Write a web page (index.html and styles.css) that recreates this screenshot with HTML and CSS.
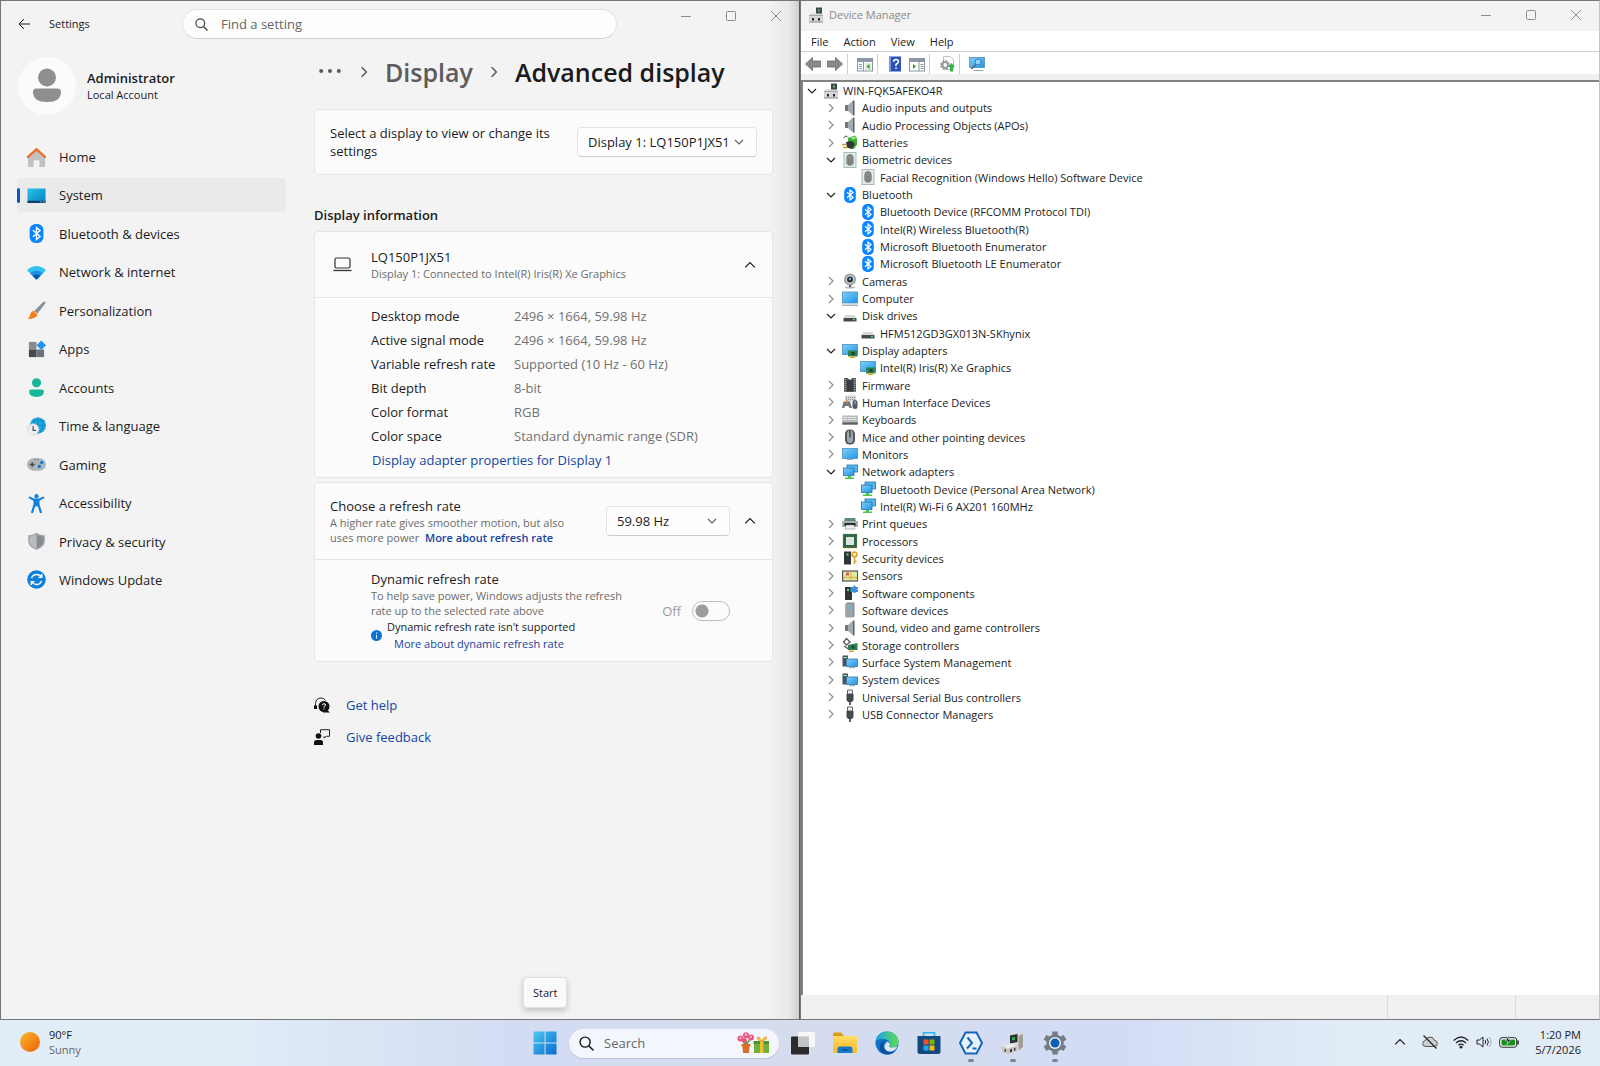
FILE: index.html
```html
<!doctype html>
<html lang="en">
  <head>
    <title>Desktop</title>
    <meta charset="UTF-8" />
    <meta name="viewport" content="width=device-width, initial-scale=1.0" />
    <link rel="stylesheet" href="styles.css">
  </head>

  <body>
    <!-- Shared icons -->
    <svg class="sprite" aria-hidden="true">
      <defs>
        <linearGradient id="g-screen" x1="0" y1="0" x2="1" y2="1">
          <stop offset="0" stop-color="#27c5e8" />
          <stop offset="1" stop-color="#0a7fc4" />
        </linearGradient>
        <linearGradient id="g-mon" x1="0" y1="0" x2="1" y2="1">
          <stop offset="0" stop-color="#7fd0fb" />
          <stop offset="1" stop-color="#1f94e6" />
        </linearGradient>
        <linearGradient id="g-sun" x1="0" y1="0" x2="1" y2="1">
          <stop offset="0" stop-color="#f7b928" />
          <stop offset="1" stop-color="#f2600c" />
        </linearGradient>
        <linearGradient id="g-win" x1="0" y1="0" x2="1" y2="1">
          <stop offset="0" stop-color="#4ccbf5" />
          <stop offset="1" stop-color="#0869cb" />
        </linearGradient>
        <linearGradient id="g-edge" x1="0" y1="0" x2="1" y2="0">
          <stop offset="0" stop-color="#1c9de8" />
          <stop offset="1" stop-color="#5fe04f" />
        </linearGradient>
        <linearGradient id="g-folder" x1="0" y1="0" x2="0" y2="1">
          <stop offset="0" stop-color="#ffdb66" />
          <stop offset="1" stop-color="#f8b91e" />
        </linearGradient>
      </defs>

      <symbol id="down" viewBox="0 0 10 10"><path d="M1 3l4 4 4-4" fill="none" stroke="currentColor" stroke-width="1.2" /></symbol>
      <symbol id="up" viewBox="0 0 10 10"><path d="M1 7l4-4 4 4" fill="none" stroke="currentColor" stroke-width="1" /></symbol>
      <symbol id="right" viewBox="0 0 10 10"><path d="M3 1l4 4-4 4" fill="none" stroke="currentColor" stroke-width="1.2" /></symbol>
      <symbol id="win-min" viewBox="0 0 10 10"><path d="M0 5.5h10" stroke="currentColor" /></symbol>
      <symbol id="win-max" viewBox="0 0 10 10"><rect x=".5" y=".5" width="9" height="9" rx="1" fill="none" stroke="currentColor" /></symbol>
      <symbol id="win-close" viewBox="0 0 10 10"><path d="M0 0l10 10M10 0L0 10" stroke="currentColor" /></symbol>
      <symbol id="search" viewBox="0 0 14 14"><circle cx="5.7" cy="5.7" r="4.7" fill="none" stroke="currentColor" stroke-width="1.3" /><path d="M9.2 9.2l4.3 4.3" stroke="currentColor" stroke-width="1.4" /></symbol>

      <!-- Settings navigation -->
      <symbol id="nav-home" viewBox="0 0 20 20">
        <path d="M1 9l9-7 9 7v11h-6v-7H7v7H1z" fill="#c2c2c2" />
        <path d="M1 9.500l9-8.200 9 8.200" fill="none" stroke="#ee6a1c" stroke-width="2.400" stroke-linecap="round" />
      </symbol>
      <symbol id="nav-system" viewBox="0 0 20 20">
        <rect x=".5" y="2.500" width="19" height="15" rx="1" fill="url(#g-screen)" />
        <path d="M.5 15.500h19v1.500q0 1-1 1h-17q-1 0-1-1z" fill="#0b3d6b" />
        <path d="M14 16.700h1.500M17 16.700h1.500" stroke="#9fd8ff" />
      </symbol>
      <symbol id="bt" viewBox="0 0 16 16">
        <rect x="2.200" y="0" width="11.600" height="16" rx="5" fill="#0a84ff" />
        <path d="M5 5.300l6 5.200L8 13V3l3 2.500L5 10.700" fill="none" stroke="#fff" stroke-width="1.200" />
      </symbol>
      <symbol id="nav-wifi" viewBox="0 0 20 20">
        <path d="M0 7.500Q10-1 20 7.500L10 17.500z" fill="#35c2f1" />
        <path d="M3.200 10.700q6.800-5.400 13.600 0L10 17.500z" fill="#1a8fe3" />
        <path d="M6 13.500q4-3 8 0l-4 4z" fill="#0c54a5" />
      </symbol>
      <symbol id="nav-brush" viewBox="0 0 20 20">
        <path d="M18.500.5q1.500.5.700 2.200L11 13.200 7.500 10.500 16.700 1.200z" fill="#8a9096" />
        <path d="M7.500 10.300l3.500 3q-.2 5.700-10.500 5.700 2.500-1.500 2.800-4.700 1-4 4.200-4z" fill="#f3801f" />
        <path d="M7.500 10.300l3.500 3-.7 1.200-4-3.500z" fill="#f9b54a" />
      </symbol>
      <symbol id="nav-apps" viewBox="0 0 20 20">
        <rect x="2" y="2" width="8" height="8" fill="#868c92" />
        <rect x="2" y="10" width="8" height="8" fill="#44494f" />
        <rect x="10" y="10" width="8" height="8" fill="#6c737a" />
        <path d="M15 .5l5 5-5 5-5-5z" fill="#2393ee" />
      </symbol>
      <symbol id="nav-user" viewBox="0 0 20 20">
        <circle cx="10" cy="5" r="4.800" fill="#18b79c" />
        <path d="M2.200 14q0-2 2-2h11.600q2 0 2 2 0 6-7.800 6t-7.800-6z" fill="#18b79c" />
      </symbol>
      <symbol id="nav-time" viewBox="0 0 20 20">
        <circle cx="11.500" cy="9" r="8.500" fill="#1ea7dc" />
        <path d="M11.500.5v17M5 4h14M5 9h15M8 2q-3 7 2 14M15 2q4 7-1 14" fill="none" stroke="#0f84c4" stroke-width=".8" />
        <circle cx="6.500" cy="13" r="6" fill="#eceff1" stroke="#c4c9cd" stroke-width=".6" />
        <path d="M6.500 9.500V14H9.500" fill="none" stroke="#4c5359" stroke-width="1.300" />
      </symbol>
      <symbol id="nav-game" viewBox="0 0 20 20">
        <rect x="0" y="3.500" width="20" height="13" rx="6.500" fill="#aeb5bb" />
        <path d="M3 10h5M5.500 7.500v5" stroke="#3f464d" stroke-width="1.400" />
        <circle cx="15.500" cy="8" r="1.700" fill="#1473cf" />
        <circle cx="13" cy="12" r="1.700" fill="#1473cf" />
        <path d="M8 4.500h1.500M10.500 4.500H12" stroke="#59616a" />
      </symbol>
      <symbol id="nav-access" viewBox="0 0 20 20">
        <circle cx="10" cy="2.300" r="2.200" fill="#1182dc" />
        <path d="M3 3.800l4 2.200h6l4-2.200M8 6v5l-2.500 8M12 6v5l2.500 8" fill="none" stroke="#1182dc" stroke-width="2.300" stroke-linecap="round" />
        <path d="M7.500 5.500h5V13h-5z" fill="#1182dc" />
      </symbol>
      <symbol id="nav-shield" viewBox="0 0 20 20">
        <path d="M10 .8q3.500 2.700 8.800 2.700v6q0 6-8.800 9.500Q1.200 15.500 1.200 9.500v-6Q6.500 3.500 10 .8z" fill="#a0a5aa" />
        <path d="M10 2.500q3.500 2.200 7.300 2.500v4.500q0 4.700-7.300 8z" fill="#858b91" />
        <path d="M10 2.500Q6.500 4.700 2.700 5v4.500q0 4.700 7.300 8z" fill="#b9bdc1" />
      </symbol>
      <symbol id="nav-update" viewBox="0 0 20 20">
        <circle cx="10" cy="10" r="9.800" fill="#0e7fda" />
        <path d="M4.700 8.500q1.600-3.700 5.500-3.700 3.300 0 5 2.700M15.300 11.500q-1.600 3.700-5.500 3.700-3.300 0-5-2.700M15.500 4.200v3.600H12M4.500 15.800v-3.600H8" fill="none" stroke="#fff" stroke-width="1.500" />
      </symbol>

      <!-- Device tree -->
      <symbol id="dm" viewBox="0 0 16 16">
        <path d="M8 .5h6V9H8z" fill="#44484b" />
        <path d="M10 2.500h2v2h-2z" fill="#45c25c" />
        <path d="M1 8l2-1.500h11L15 8v7H1z" fill="#d5d7d9" />
        <path d="M1 8.500h14" stroke="#a5a9ac" />
        <path d="M4 11h2v2.500H4zM10 11h2v2.500h-2z" fill="#26292c" />
        <path d="M1 15h14" stroke="#83888c" />
      </symbol>
      <symbol id="speaker" viewBox="0 0 16 16">
        <path d="M3 5h3v6H3z" fill="#70767b" />
        <path d="M6 5l5-4.500v15L6 11z" fill="#a4abb1" />
        <path d="M11 .5h1.500v15H11z" fill="#5b6166" />
      </symbol>
      <symbol id="battery" viewBox="0 0 16 16">
        <path d="M6 3l7-2.500 2 3v6l-3 4.500-6-1z" fill="#3cae35" />
        <path d="M9 2.500l4-1 1 2-4 1z" fill="#a8e59b" />
        <path d="M4 7l6-1 3 3-3 5-5-1.500z" fill="#333" />
        <path d="M0 9.500h4M1 12.500h4" stroke="#c99b1e" stroke-width="1.300" />
        <path d="M1.500 3Q4-.500 6 2.500" fill="none" stroke="#444" />
      </symbol>
      <symbol id="finger" viewBox="0 0 16 16">
        <rect x="2" y=".5" width="12" height="15" fill="#e4ecea" stroke="#a8bbb5" />
        <path d="M4.500 6q0-4 3.500-4t3.500 4v4q0 4-3.500 4t-3.500-4z" fill="#9fa4a6" />
        <path d="M5 12V6q0-3 3-3t3 3v6M6.700 13V6.500q0-1.700 1.300-1.700t1.300 1.700V13M8 7v6" fill="none" stroke="#5f6466" stroke-width=".8" />
      </symbol>
      <symbol id="camera" viewBox="0 0 16 16">
        <ellipse cx="8" cy="14.500" rx="5" ry="1" fill="#b2b4b6" />
        <path d="M7 11h2v3H7z" fill="#505356" />
        <circle cx="8" cy="6.500" r="6" fill="#9b9fa2" />
        <circle cx="8" cy="6.500" r="4.200" fill="#d2d6d8" />
        <circle cx="8" cy="6.500" r="3" fill="#2b2e31" />
        <circle cx="8" cy="6" r="1.200" fill="#77a6cf" />
      </symbol>
      <symbol id="computer" viewBox="0 0 16 16">
        <rect x=".5" y="1" width="15" height="11" fill="url(#g-mon)" stroke="#4c91bd" stroke-width=".8" />
        <path d="M0 14.200h16" stroke="#8fa3b1" stroke-width="1.200" />
      </symbol>
      <symbol id="disk" viewBox="0 0 16 16">
        <path d="M3.500 7h9l2 3h-13z" fill="#d7d9da" />
        <path d="M1.500 10h13v3.500h-13z" fill="#45494c" />
        <path d="M11 11.500h2" stroke="#4fe05a" stroke-width="1.400" />
      </symbol>
      <symbol id="gpu" viewBox="0 0 16 16">
        <rect x=".5" y="1.500" width="15" height="10" fill="url(#g-mon)" stroke="#4c91bd" stroke-width=".8" />
        <path d="M6 7.500h9.500v6H6z" fill="#2d8057" />
        <path d="M8 13.500h5V15H8z" fill="#e9a81c" />
        <circle cx="11" cy="10.500" r="1.800" fill="#16492f" />
      </symbol>
      <symbol id="firmware" viewBox="0 0 16 16">
        <path d="M2 1h4l1 1.500h2L10 1h4v14H2z" fill="#55595c" />
        <path d="M5 3h6v11H5z" fill="#3a3d40" />
        <path d="M3.200 2v13M12.800 2v13" stroke="#c2c5c7" stroke-dasharray="1 1" />
      </symbol>
      <symbol id="hid" viewBox="0 0 16 16">
        <path d="M3 1.500h11v6H3z" fill="#d4d7d9" />
        <path d="M4 3.500h9M4 5.500h9" stroke="#8e9396" stroke-dasharray="1 1" />
        <path d="M0 14l1.500-6.500H8l2 6.500H7.500L6.500 12h-3L2 14z" fill="#707a82" />
        <circle cx="5" cy="7.500" r="1.300" fill="#e08a35" />
        <rect x="10.500" y="6" width="5" height="9" rx="2.500" fill="#565c62" />
        <path d="M13 7v3" stroke="#9ec4e4" />
      </symbol>
      <symbol id="keyboard" viewBox="0 0 16 16">
        <rect x=".3" y="3.500" width="15.500" height="9" fill="#b4b9bd" />
        <path d="M1.500 5.500h13M1.500 7.500h13" stroke="#f5f6f7" stroke-dasharray="1.500 .7" />
        <path d="M.3 11.500h15.500" stroke="#596067" stroke-width="2.200" />
      </symbol>
      <symbol id="mouse" viewBox="0 0 16 16">
        <rect x="3" y=".5" width="10" height="15" rx="4.500" fill="#50565c" />
        <rect x="5" y="1.500" width="6" height="12.500" rx="3" fill="#9da6ae" />
        <path d="M8 1.500v7" stroke="#363b40" stroke-width="1.300" />
      </symbol>
      <symbol id="monitor" viewBox="0 0 16 16">
        <rect x=".5" y="2.500" width="15" height="10" fill="url(#g-mon)" stroke="#4c91bd" stroke-width=".8" />
        <path d="M5 13.500h6" stroke="#8fa3b1" />
      </symbol>
      <symbol id="network" viewBox="0 0 16 16">
        <rect x="5" y="1" width="10.500" height="7" fill="#59b7f0" stroke="#2473a8" stroke-width=".8" />
        <rect x="1.500" y="4" width="10.500" height="7.500" fill="url(#g-mon)" stroke="#2473a8" stroke-width=".8" />
        <path d="M6 12h3v1.500h3V15H3v-1.500h3z" fill="#4ec44b" />
      </symbol>
      <symbol id="printer" viewBox="0 0 16 16">
        <path d="M3 2h10l1 3H2z" fill="#5b8a86" />
        <path d="M0 5h16v6H0z" fill="#a9afb4" />
        <path d="M2.500 7h11v3h-11z" fill="#24282b" />
        <path d="M4 9h8l1 4H3z" fill="#eef0f1" stroke="#777" stroke-width=".5" />
      </symbol>
      <symbol id="cpu" viewBox="0 0 16 16">
        <rect x="1" y="1" width="14" height="14" fill="#2c6848" stroke="#b98d3a" stroke-width=".7" stroke-dasharray="1 1" />
        <rect x="4" y="4" width="8" height="8" fill="#dfe3e1" />
      </symbol>
      <symbol id="security" viewBox="0 0 16 16">
        <path d="M2 1.500h7v13H2z" fill="#323537" />
        <path d="M4.500 3.500h2v2h-2z" fill="#5be060" />
        <circle cx="12.500" cy="4.500" r="2.300" fill="none" stroke="#e0a02c" stroke-width="1.800" />
        <path d="M12.500 7v7M12.500 11.500h2" stroke="#e0a02c" stroke-width="1.600" />
      </symbol>
      <symbol id="sensor" viewBox="0 0 16 16">
        <rect x=".6" y="3" width="15" height="10" fill="#dcebb0" stroke="#4d5052" stroke-width="1.200" />
        <path d="M1 9.500h14M9 3.500v9" stroke="#e5b93e" stroke-width="1.300" />
        <path d="M4 4.500h3v3H4z" fill="#db5a48" />
      </symbol>
      <symbol id="component" viewBox="0 0 16 16">
        <path d="M3 2h7v13H3z" fill="#323537" />
        <path d="M5 4h2v2H5z" fill="#5be060" />
        <path d="M8.500 2h3V.5h2V2H16v2h-1v1h1v2h-2.500v1h-2V7h-3z" fill="#3a8fdc" />
      </symbol>
      <symbol id="software" viewBox="0 0 16 16">
        <path d="M3.500 2l1.500-1.500h7.500V15h-9z" fill="#868d96" />
        <path d="M3.500 2h7.500v13.500H3.500z" fill="#9ca3ab" />
        <path d="M6.500 4.500h2.300v2.300H6.500z" fill="#45c2e8" />
      </symbol>
      <symbol id="storage" viewBox="0 0 16 16">
        <path d="M4.500 1.500L8 5 4.500 8 1.500 5z" fill="none" stroke="#555a5e" stroke-width="1.300" />
        <path d="M2 9l6 4" stroke="#555a5e" stroke-width="1.500" />
        <path d="M6 8l9.500-2v7H6z" fill="#2d8057" />
        <circle cx="11" cy="10" r="1.700" fill="#16492f" />
        <path d="M7 13.500h5V15H7z" fill="#e9a81c" />
      </symbol>
      <symbol id="sysdev" viewBox="0 0 16 16">
        <path d="M.5 1.500H6v11H.5z" fill="#4c5358" />
        <path d="M1.500 3.500H5" stroke="#8ff0d8" />
        <rect x="4.500" y="5" width="11" height="7.500" fill="url(#g-mon)" stroke="#3a7ba8" stroke-width=".8" />
        <path d="M7 13.700h6" stroke="#8fa3b1" />
      </symbol>
      <symbol id="usb" viewBox="0 0 16 16">
        <path d="M5.500 1h5v4h-5z" fill="#f0f0f0" stroke="#606468" />
        <path d="M4.500 5h7v6L10 13H6l-1.500-2z" fill="#45494c" />
        <path d="M8 13v3" stroke="#45494c" stroke-width="1.700" />
      </symbol>
    </svg>

    <main class="desktop">
      <section class="window settings" aria-label="Settings">
        <header class="settings-bar">
          <button class="icon-btn" aria-label="Back">
            <svg width="12" height="12" viewBox="0 0 12 12"><path d="M6 1L1 6l5 5M1 6h11" fill="none" stroke="currentColor" /></svg>
          </button>
          <span class="app-name">Settings</span>
          <label class="find">
            <svg width="13" height="13"><use href="#search" /></svg>
            <input type="text" placeholder="Find a setting" aria-label="Find a setting" />
          </label>
          <div class="controls">
            <button class="icon-btn" aria-label="Minimize"><svg width="10" height="10"><use href="#win-min" /></svg></button>
            <button class="icon-btn" aria-label="Maximize"><svg width="10" height="10"><use href="#win-max" /></svg></button>
            <button class="icon-btn" aria-label="Close"><svg width="10" height="10"><use href="#win-close" /></svg></button>
          </div>
        </header>

        <div class="settings-body">
          <aside class="sidebar">
            <div class="account">
              <svg class="avatar" viewBox="0 0 58 58">
                <circle cx="29" cy="29" r="29" fill="#fbfbfb" />
                <circle cx="29" cy="20.500" r="9" fill="#8f8f8f" />
                <path d="M15 35q0-3.500 3.500-3.500h21q3.500 0 3.500 3.500 0 10-14 10T15 35z" fill="#8f8f8f" />
              </svg>
              <div>
                <div class="account-name">Administrator</div>
                <div class="account-type">Local Account</div>
              </div>
            </div>
            <nav class="nav">
              <a href="#"><svg><use href="#nav-home" /></svg>Home</a>
              <a href="#" class="active" aria-current="page"><svg><use href="#nav-system" /></svg>System</a>
              <a href="#"><svg><use href="#bt" /></svg>Bluetooth &amp; devices</a>
              <a href="#"><svg><use href="#nav-wifi" /></svg>Network &amp; internet</a>
              <a href="#"><svg><use href="#nav-brush" /></svg>Personalization</a>
              <a href="#"><svg><use href="#nav-apps" /></svg>Apps</a>
              <a href="#"><svg><use href="#nav-user" /></svg>Accounts</a>
              <a href="#"><svg><use href="#nav-time" /></svg>Time &amp; language</a>
              <a href="#"><svg><use href="#nav-game" /></svg>Gaming</a>
              <a href="#"><svg><use href="#nav-access" /></svg>Accessibility</a>
              <a href="#"><svg><use href="#nav-shield" /></svg>Privacy &amp; security</a>
              <a href="#"><svg><use href="#nav-update" /></svg>Windows Update</a>
            </nav>
          </aside>

          <div class="page">
            <div class="breadcrumb">
              <button class="icon-btn" aria-label="More">
                <svg width="22" height="6" viewBox="0 0 22 6"><g fill="#5a5a5a"><circle cx="2.200" cy="2" r="2" /><circle cx="11" cy="2" r="2" /><circle cx="19.800" cy="2" r="2" /></g></svg>
              </button>
              <svg class="crumb-sep" width="12" height="12"><use href="#right" /></svg>
              <a href="#">Display</a>
              <svg class="crumb-sep" width="12" height="12"><use href="#right" /></svg>
              <h1>Advanced display</h1>
            </div>

            <div class="card select-card">
              <label for="display-select">Select a display to view or change its settings</label>
              <span class="select">
                <select id="display-select">
                  <option>Display 1: LQ150P1JX51</option>
                </select>
                <svg width="10" height="10"><use href="#down" /></svg>
              </span>
            </div>

            <h2>Display information</h2>
            <div class="card">
              <div class="card-head">
                <svg class="laptop" width="19" height="15" viewBox="0 0 19 15"><rect x="2" y="1" width="15" height="10" rx="1.500" fill="none" stroke="#333" stroke-width="1.200" /><path d="M.5 13.500h18" stroke="#333" stroke-width="1.300" /></svg>
                <div class="grow">
                  <div class="title">LQ150P1JX51</div>
                  <div class="note">Display 1: Connected to Intel(R) Iris(R) Xe Graphics</div>
                </div>
                <button class="icon-btn" aria-label="Collapse"><svg width="12" height="12"><use href="#up" /></svg></button>
              </div>
              <div class="card-body info">
                <dl>
                  <dt>Desktop mode</dt><dd>2496 × 1664, 59.98 Hz</dd>
                  <dt>Active signal mode</dt><dd>2496 × 1664, 59.98 Hz</dd>
                  <dt>Variable refresh rate</dt><dd>Supported (10 Hz - 60 Hz)</dd>
                  <dt>Bit depth</dt><dd>8-bit</dd>
                  <dt>Color format</dt><dd>RGB</dd>
                  <dt>Color space</dt><dd>Standard dynamic range (SDR)</dd>
                </dl>
                <a class="adapter" href="#">Display adapter properties for Display 1</a>
              </div>
            </div>

            <div class="card">
              <div class="card-head rate">
                <div class="grow">
                  <label class="title" for="rate-select">Choose a refresh rate</label>
                  <div class="note">A higher rate gives smoother motion, but also uses more power <a class="strong" href="#">More about refresh rate</a></div>
                </div>
                <span class="select">
                  <select id="rate-select">
                    <option>59.98 Hz</option>
                  </select>
                  <svg width="10" height="10"><use href="#down" /></svg>
                </span>
                <button class="icon-btn" aria-label="Collapse"><svg width="12" height="12"><use href="#up" /></svg></button>
              </div>
              <div class="card-body dynamic">
                <div class="grow">
                  <div class="title">Dynamic refresh rate</div>
                  <div class="note">To help save power, Windows adjusts the refresh rate up to the selected rate above</div>
                  <div class="hint">
                    <svg width="11" height="11" viewBox="0 0 11 11"><circle cx="5.500" cy="5.500" r="5.500" fill="#0a74d4" /><path d="M5.500 2.500v1.300M5.500 5v3.500" stroke="#fff" /></svg>
                    <div>
                      <div>Dynamic refresh rate isn't supported</div>
                      <a href="#">More about dynamic refresh rate</a>
                    </div>
                  </div>
                </div>
                <label class="off">Off <input type="checkbox" class="toggle" disabled /></label>
              </div>
            </div>

            <div class="links">
              <a href="#">
                <svg viewBox="0 0 16 16"><path d="M1.500 11V6.500Q2 1 7 1q3.200 0 4.500 2.500" fill="none" stroke="#222" /><path d="M0 8.500h3V12H0z" fill="#111" /><circle cx="10" cy="9.500" r="5.500" fill="#111" /><path d="M11 11l5 4.500H9z" fill="#111" /><path d="M8.500 8.200q0-1.500 1.500-1.500t1.500 1.300q0 .8-1.500 1.700v.8M10 11.500v1" fill="none" stroke="#fff" /></svg>
                Get help
              </a>
              <a href="#">
                <svg viewBox="0 0 16 16"><circle cx="4.500" cy="7" r="2.800" fill="#111" /><path d="M0 16v-2.500q0-2.500 2.500-2.500h4Q9 11 9 13.500V16z" fill="#111" /><path d="M6.500 4V.7h9v6.600h-3L10 9V7.300" fill="none" stroke="#222" /></svg>
                Give feedback
              </a>
            </div>
          </div>
        </div>
      </section>

      <section class="window devices" aria-label="Device Manager">
        <header class="devices-bar">
          <svg width="16" height="16"><use href="#dm" /></svg>
          <span class="grow">Device Manager</span>
          <div class="controls">
            <button class="icon-btn" aria-label="Minimize"><svg width="10" height="10"><use href="#win-min" /></svg></button>
            <button class="icon-btn" aria-label="Maximize"><svg width="10" height="10"><use href="#win-max" /></svg></button>
            <button class="icon-btn" aria-label="Close"><svg width="10" height="10"><use href="#win-close" /></svg></button>
          </div>
        </header>
        <div class="menu">
          <button>File</button>
          <button>Action</button>
          <button>View</button>
          <button>Help</button>
        </div>
        <div class="toolbar">
          <button class="icon-btn" aria-label="Back"><svg viewBox="0 0 16 16"><path d="M.5 8l7-6.500V5h8v6h-8v3.500z" fill="#8a8a8a" stroke="#666" stroke-width=".8" /></svg></button>
          <button class="icon-btn" aria-label="Forward"><svg viewBox="0 0 16 16"><path d="M15.500 8l-7-6.500V5h-8v6h8v3.500z" fill="#8a8a8a" stroke="#666" stroke-width=".8" /></svg></button>
          <i></i>
          <button class="icon-btn" aria-label="Console tree"><svg viewBox="0 0 16 16"><rect x=".5" y="2.500" width="15" height="12.500" fill="#fff" stroke="#8a939b" /><path d="M1 3h14v3H1z" fill="#8c98a3" /><path d="M2 8.500h3M2 10.500h3M2 12.500h3" stroke="#6aa0d8" /><path d="M6.500 6v9" stroke="#8a939b" /><path d="M8 7h6.500v7H8z" fill="#dfe9dc" /><path d="M12.500 8v5L9.500 10.500z" fill="#2f9c2f" /></svg></button>
          <i></i>
          <button class="icon-btn" aria-label="Help"><svg viewBox="0 0 16 16"><rect x="2" y=".5" width="12" height="15" fill="#2c51b8" /><path d="M2 .5h2v15H2z" fill="#7d97dd" /><path d="M6.500 5.800q0-2.300 2.500-2.300t2.500 2.100Q11.500 7 9 8.500V10M9 11.500v1.500" fill="none" stroke="#fff" stroke-width="1.500" /></svg></button>
          <button class="icon-btn" aria-label="Action pane"><svg viewBox="0 0 16 16"><rect x=".5" y="2.500" width="15" height="12.500" fill="#fff" stroke="#8a939b" /><path d="M1 3h14v3H1z" fill="#8c98a3" /><path d="M11.500 8.500h3M11.500 10.500h3M11.500 12.500h3" stroke="#8a939b" /><path d="M10 6v9" stroke="#8a939b" /><path d="M4 8v5l3-2.500z" fill="#2f9c2f" /></svg></button>
          <i></i>
          <button class="icon-btn" aria-label="Scan for hardware changes"><svg viewBox="0 0 16 16"><path d="M4.500.5h7l3 3v10h-10z" fill="#fbfbfb" stroke="#c2c2c2" /><circle cx="6" cy="9" r="3.600" fill="none" stroke="#8f9498" stroke-width="2.500" stroke-dasharray="2 .8" /><circle cx="6" cy="9" r="2.700" fill="none" stroke="#8f9498" stroke-width="1.200" /><path d="M12.500 7l3.500 4h-2v4.500h-3V11H9z" fill="#34b34a" /></svg></button>
          <i></i>
          <button class="icon-btn" aria-label="Remote computer"><svg viewBox="0 0 16 16"><rect x=".5" y="1.500" width="15" height="10" fill="url(#g-mon)" stroke="#4c91bd" stroke-width=".8" /><circle cx="9" cy="6" r="3" fill="#8fd2f8" stroke="#4a7ea3" /><path d="M7 8.200L2.500 13" stroke="#5c6a75" stroke-width="1.600" /><path d="M5 14.500h9" stroke="#8fa3b1" /></svg></button>
        </div>

        <ul class="tree">
          <li class="root open"><svg class="arrow"><use href="#down" /></svg><svg><use href="#dm" /></svg>WIN-FQK5AFEKO4R</li>
          <li><svg class="arrow"><use href="#right" /></svg><svg><use href="#speaker" /></svg>Audio inputs and outputs</li>
          <li><svg class="arrow"><use href="#right" /></svg><svg><use href="#speaker" /></svg>Audio Processing Objects (APOs)</li>
          <li><svg class="arrow"><use href="#right" /></svg><svg><use href="#battery" /></svg>Batteries</li>
          <li class="open"><svg class="arrow"><use href="#down" /></svg><svg><use href="#finger" /></svg>Biometric devices</li>
          <li class="leaf"><svg><use href="#finger" /></svg>Facial Recognition (Windows Hello) Software Device</li>
          <li class="open"><svg class="arrow"><use href="#down" /></svg><svg><use href="#bt" /></svg>Bluetooth</li>
          <li class="leaf"><svg><use href="#bt" /></svg>Bluetooth Device (RFCOMM Protocol TDI)</li>
          <li class="leaf"><svg><use href="#bt" /></svg>Intel(R) Wireless Bluetooth(R)</li>
          <li class="leaf"><svg><use href="#bt" /></svg>Microsoft Bluetooth Enumerator</li>
          <li class="leaf"><svg><use href="#bt" /></svg>Microsoft Bluetooth LE Enumerator</li>
          <li><svg class="arrow"><use href="#right" /></svg><svg><use href="#camera" /></svg>Cameras</li>
          <li><svg class="arrow"><use href="#right" /></svg><svg><use href="#computer" /></svg>Computer</li>
          <li class="open"><svg class="arrow"><use href="#down" /></svg><svg><use href="#disk" /></svg>Disk drives</li>
          <li class="leaf"><svg><use href="#disk" /></svg>HFM512GD3GX013N-SKhynix</li>
          <li class="open"><svg class="arrow"><use href="#down" /></svg><svg><use href="#gpu" /></svg>Display adapters</li>
          <li class="leaf"><svg><use href="#gpu" /></svg>Intel(R) Iris(R) Xe Graphics</li>
          <li><svg class="arrow"><use href="#right" /></svg><svg><use href="#firmware" /></svg>Firmware</li>
          <li><svg class="arrow"><use href="#right" /></svg><svg><use href="#hid" /></svg>Human Interface Devices</li>
          <li><svg class="arrow"><use href="#right" /></svg><svg><use href="#keyboard" /></svg>Keyboards</li>
          <li><svg class="arrow"><use href="#right" /></svg><svg><use href="#mouse" /></svg>Mice and other pointing devices</li>
          <li><svg class="arrow"><use href="#right" /></svg><svg><use href="#monitor" /></svg>Monitors</li>
          <li class="open"><svg class="arrow"><use href="#down" /></svg><svg><use href="#network" /></svg>Network adapters</li>
          <li class="leaf"><svg><use href="#network" /></svg>Bluetooth Device (Personal Area Network)</li>
          <li class="leaf"><svg><use href="#network" /></svg>Intel(R) Wi-Fi 6 AX201 160MHz</li>
          <li><svg class="arrow"><use href="#right" /></svg><svg><use href="#printer" /></svg>Print queues</li>
          <li><svg class="arrow"><use href="#right" /></svg><svg><use href="#cpu" /></svg>Processors</li>
          <li><svg class="arrow"><use href="#right" /></svg><svg><use href="#security" /></svg>Security devices</li>
          <li><svg class="arrow"><use href="#right" /></svg><svg><use href="#sensor" /></svg>Sensors</li>
          <li><svg class="arrow"><use href="#right" /></svg><svg><use href="#component" /></svg>Software components</li>
          <li><svg class="arrow"><use href="#right" /></svg><svg><use href="#software" /></svg>Software devices</li>
          <li><svg class="arrow"><use href="#right" /></svg><svg><use href="#speaker" /></svg>Sound, video and game controllers</li>
          <li><svg class="arrow"><use href="#right" /></svg><svg><use href="#storage" /></svg>Storage controllers</li>
          <li><svg class="arrow"><use href="#right" /></svg><svg><use href="#sysdev" /></svg>Surface System Management</li>
          <li><svg class="arrow"><use href="#right" /></svg><svg><use href="#sysdev" /></svg>System devices</li>
          <li><svg class="arrow"><use href="#right" /></svg><svg><use href="#usb" /></svg>Universal Serial Bus controllers</li>
          <li><svg class="arrow"><use href="#right" /></svg><svg><use href="#usb" /></svg>USB Connector Managers</li>
        </ul>
        <footer class="status"><span></span><span></span><span></span></footer>
      </section>
    </main>

    <footer class="taskbar">
      <div class="weather">
        <svg width="20" height="20" viewBox="0 0 20 20"><circle cx="10" cy="10" r="10" fill="url(#g-sun)" /></svg>
        <div>90°F<br /><span>Sunny</span></div>
      </div>

      <div class="apps">
        <button class="app" aria-label="Start">
          <svg viewBox="0 0 24 24"><path d="M.5.500h11v11H.5zM12.500.500h11v11h-11zM.5 12.500h11v11H.5zM12.500 12.500h11v11h-11z" fill="url(#g-win)" /></svg>
          <span class="tooltip">Start</span>
        </button>
        <label class="task-search">
          <svg width="15" height="15"><use href="#search" /></svg>
          <input type="text" placeholder="Search" aria-label="Search" />
          <svg width="32" height="22" viewBox="0 0 32 22">
            <path d="M9 8v6M4 7l5 6M14 6l-5 7" stroke="#4f9a3f" stroke-width="1.300" fill="none" />
            <g fill="#e8577f"><circle cx="3.500" cy="6.500" r="3" /><circle cx="9" cy="3.300" r="3" /><circle cx="14" cy="5.500" r="3" /><circle cx="7.500" cy="8.500" r="2.500" /></g>
            <g fill="#f9b3c6"><circle cx="3.500" cy="6" r="1.200" /><circle cx="9" cy="2.800" r="1.200" /><circle cx="14" cy="5" r="1.200" /></g>
            <path d="M4.500 12h9v2.500h-1L12 21H6l-.5-6.500h-1z" fill="#d8702c" />
            <path d="M17 10.500h15V21H17z" fill="#6db33a" />
            <path d="M16.500 9h15.500v3H16.500z" fill="#4e9430" />
            <path d="M23 9h3.500v12H23z" fill="#f1bd35" />
            <path d="M24.500 9q-6-1-4-4 2-1 4 4 3-5 5-4 1.500 3-5 4z" fill="#f4c644" stroke="#d79a1d" stroke-width=".6" />
          </svg>
        </label>
        <button class="app" aria-label="Task view">
          <svg viewBox="0 0 24 24"><rect x="0" y="5.500" width="18" height="18" rx="1" fill="#2b2b2b" /><rect x="7" y="1" width="17" height="15" rx="1" fill="#f5f6f8" /><path d="M7 5.500h11V16H7z" fill="#c3c4c6" /></svg>
        </button>
        <button class="app" aria-label="File Explorer">
          <svg viewBox="0 0 24 24"><path d="M0 3q0-1.500 1.500-1.500H8L11 5H0z" fill="#dd9a17" /><path d="M0 5h22.500Q24 5 24 6.500v14Q24 22 22.500 22h-21Q0 22 0 20.500z" fill="url(#g-folder)" /><path d="M4.500 22v-4q0-2.500 2.500-2.500h10q2.500 0 2.500 2.500v4z" fill="#1478cf" /><path d="M8.500 19h7" stroke="#0a4f94" stroke-width="1.500" /></svg>
        </button>
        <button class="app" aria-label="Edge">
          <svg viewBox="0 0 24 24"><circle cx="12" cy="12" r="11.500" fill="#1271c9" /><path d="M.7 10Q2.500.500 12 .500q8.500 0 11.300 8.500 1 7.500-6.300 7.500-3.500 0-2.700-2Q16 12 13.500 9.500 8 6 .7 10z" fill="url(#g-edge)" /><path d="M8.500 13q-1.500 5 4 8 4 1.500 8-1Q17 23.500 12 23.500 3.500 22.500 5 14.500 7 9 12 9q-3 1-3.500 4z" fill="#0c4f9e" /><path d="M14.300 14.500q-.8 2 2.700 2 3.500 0 5.300-1.500Q21 19.500 16 20.500q-5 .5-6.500-4-.5-4 3.500-6 2.500 2 1.300 4z" fill="#dfe6f4" /></svg>
        </button>
        <button class="app" aria-label="Microsoft Store">
          <svg viewBox="0 0 24 24"><path d="M6.500 6V1.700h11V6" fill="none" stroke="#2db4ee" stroke-width="1.600" /><path d="M.5 5h23v15.500q0 2.500-2.500 2.500H3Q.5 23 .5 20.500z" fill="#124a80" /><path d="M6.500 8.500h5v5h-5z" fill="#f25022" /><path d="M12.500 8.500h5v5h-5z" fill="#7fba00" /><path d="M6.500 14.500h5v5h-5z" fill="#22a5f0" /><path d="M12.500 14.500h5v5h-5z" fill="#ffb900" /></svg>
        </button>
        <button class="app running" aria-label="PowerShell">
          <svg viewBox="0 0 24 24"><path d="M6.500 1.500h11L23 12l-5.500 10.500h-11L1 12z" fill="#e9f2fb" stroke="#1267b8" stroke-width="2" /><path d="M8.500 6.500l4.500 5.500-5 5.500M13.500 17.500h4" fill="none" stroke="#1267b8" stroke-width="2" /></svg>
        </button>
        <button class="app running" aria-label="Device Manager">
          <svg viewBox="0 0 24 24"><path d="M8 3.500L17 1.500l5 1.500v13l-6 4.500H8z" fill="#dad8d5" /><path d="M17.500 5L22 3v13l-4.500 3.500z" fill="#a19e9a" /><path d="M9 4.500l7.500-1.500v8L9 12.500z" fill="#2b2e30" /><path d="M11 6.500l3-.5v3l-3 .5z" fill="#3fae58" /><path d="M1 15l9-2.500 6 2v5.500l-9 3-6-2z" fill="#c8c5c2" /><path d="M1 15l9-2.500 6 2-9 3z" fill="#ecebe9" /><path d="M3.500 18l1.500.5V21l-1.500-.5zM9 18.500l2-.7v3l-2 .7zM13 17.200l1.500-.5v2.500L13 19.700z" fill="#3b3b3b" /></svg>
        </button>
        <button class="app running" aria-label="Settings">
          <svg viewBox="0 0 24 24"><circle cx="12" cy="12" r="8.700" fill="#737b85" /><g stroke="#737b85" stroke-width="5.500"><path d="M12 .5v23M2 6.300l20 11.400M2 17.700L22 6.300" /></g><circle cx="12" cy="12" r="6" fill="#edf2f8" /><circle cx="12" cy="12" r="4.500" fill="#0c5fb5" /></svg>
        </button>
      </div>

      <div class="tray">
        <button class="icon-btn" aria-label="Show hidden icons"><svg width="12" height="12"><use href="#up" /></svg></button>
        <svg class="cloud" width="16" height="14" viewBox="0 0 16 14"><path d="M4 11.500Q.7 11.500.7 8.500q0-2.700 2.800-3Q4.500 2 8 2q3.500 0 4.300 3.300 3 .2 3 3.200t-3 3z" fill="#cfcfcf" stroke="#555" /><path d="M1.500.500l13 13" stroke="#222" stroke-width="1.200" /></svg>
        <span class="status-icons">
          <svg width="16" height="14" viewBox="0 0 16 14"><path d="M.7 5.500q7.300-7 14.600 0M3 8q5-4.500 10 0M5.300 10.300q2.700-2.300 5.400 0" fill="none" stroke="#222" stroke-width="1.200" /><circle cx="8" cy="12.200" r="1.400" fill="#222" /></svg>
          <svg width="16" height="14" viewBox="0 0 16 14"><path d="M1 5h2.500L7 2v10L3.500 9H1z" fill="none" stroke="#222" /><path d="M9 5q1.500 2 0 4M11 3.500q2.800 3.500 0 7" fill="none" stroke="#222" /><path d="M13 2q4 5 0 10" fill="none" stroke="#a5adb4" /></svg>
          <svg width="20" height="14" viewBox="0 0 20 14"><rect x=".7" y="2.700" width="17" height="9.500" rx="2.500" fill="#fff" stroke="#222" /><rect x="2.500" y="4.500" width="13.500" height="6" rx="1" fill="#13911a" /><path d="M19 5.500v4" stroke="#222" stroke-width="1.500" /><path d="M10 0L6.500 6H9L8 9.500 12 4.500H9.500z" fill="#222" stroke="#e1ecf7" stroke-width=".6" /></svg>
        </span>
        <div class="clock">1:20 PM<br />5/7/2026</div>
      </div>
    </footer>
  </body>
</html>
```
FILE: styles.css
```css
* {
  box-sizing: border-box;
}
html,
body {
  height: 100%;
}
body {
  margin: 0;
  display: grid;
  grid-template-rows: minmax(0, 1fr) 46px;
  overflow: hidden;
  font: 400 13px/18px 'Open Sans', 'Noto Sans', sans-serif;
  color: #1b1b1b;
  background: #e1ecf7;
}
button,
input,
select {
  font: inherit;
  color: inherit;
}
a {
  color: #1544a0;
  text-decoration: none;
}
svg {
  display: block;
  flex: none;
}
.sprite {
  position: absolute;
  width: 0;
  height: 0;
}
.icon-btn {
  display: flex;
  align-items: center;
  padding: 0;
  border: 0;
  background: none;
}
.grow {
  flex: 1;
}

/* Windows */
.desktop {
  display: grid;
  grid-template-columns: minmax(0, 1fr) minmax(0, 1fr);
}
.window {
  display: flex;
  flex-direction: column;
  min-height: 0;
  border: 1px solid #777;
}
.controls {
  display: flex;
  gap: 35px;
  color: #8c8c8c;
}

/* Settings */
.settings {
  border-right-color: #5c5c5c;
  background: linear-gradient(to left, #cfcfcf, #e9e9e9 10px, #f3f3f3 32px);
}
.settings-bar {
  display: grid;
  grid-template-columns: 31px 133px 435px 1fr;
  align-items: center;
  height: 46px;
  padding: 0 18px 0 17px;
}
.app-name {
  font-size: 11px;
}
.find {
  display: flex;
  align-items: center;
  gap: 13px;
  height: 30px;
  padding: 0 12px;
  border: 1px solid #e3e3e3;
  border-bottom-color: #cfcfcf;
  border-radius: 15px;
  background: #fdfdfd;
  color: #444;
}
.find input,
.task-search input {
  flex: 1;
  min-width: 0;
  padding: 0;
  border: 0;
  outline: 0;
  background: none;
}
input::placeholder {
  color: #666;
  opacity: 1;
}
.settings .controls {
  align-self: start;
  justify-content: flex-end;
  padding-top: 10px;
}
.settings-body {
  display: flex;
  gap: 28px;
  padding: 0 26px 0 16px;
}
.sidebar {
  width: 269px;
  padding-top: 10px;
}
.account {
  display: flex;
  align-items: center;
  gap: 11px;
  padding-left: 1px;
}
.avatar {
  width: 58px;
  height: 58px;
}
.account-name {
  font-weight: 600;
  line-height: 17px;
}
.account-type {
  font-size: 11px;
  line-height: 16px;
}
.nav {
  display: flex;
  flex-direction: column;
  justify-content: space-between;
  height: 457px;
  margin-top: 25px;
}
.nav a {
  position: relative;
  display: flex;
  align-items: center;
  gap: 13px;
  height: 34px;
  padding-left: 10px;
  border-radius: 4px;
  color: inherit;
}
.nav svg {
  width: 19px;
  height: 19px;
}
.nav .active {
  background: #eaeaea;
}
.nav .active::before {
  content: '';
  position: absolute;
  left: 0;
  width: 3px;
  height: 15px;
  border-radius: 2px;
  background: #0b57c4;
}

.page {
  flex: 1;
  min-width: 0;
}
.breadcrumb {
  display: flex;
  align-items: center;
  gap: 15px;
  height: 50px;
  padding-left: 5px;
  font-size: 25px;
  font-weight: 600;
  line-height: 36px;
}
.breadcrumb a {
  color: #5c5c5c;
}
.breadcrumb h1 {
  margin: 0;
  font: inherit;
  white-space: nowrap;
}
.breadcrumb .icon-btn {
  margin-right: 2px;
}
.crumb-sep {
  color: #555;
}
.card {
  margin-bottom: 4px;
  border: 1px solid #e5e5e5;
  border-radius: 4px;
  background: #fbfbfb;
}
.select-card {
  display: flex;
  align-items: center;
  justify-content: space-between;
  height: 66px;
  margin-top: 12px;
  padding: 0 15px;
}
.select-card label {
  width: 232px;
}
.select {
  position: relative;
}
.select select {
  appearance: none;
  display: block;
  height: 30px;
  padding: 0 10px;
  border: 1px solid #e4e4e4;
  border-bottom-color: #cccccc;
  border-radius: 4px;
  background: #fefefe;
}
.select svg {
  position: absolute;
  right: 13px;
  top: 10px;
  color: #666;
  pointer-events: none;
}
#display-select {
  width: 180px;
}
#rate-select {
  width: 124px;
}
.page h2 {
  margin: 31px 0 7px;
  font-size: 13px;
  font-weight: 600;
}
.card-head {
  display: flex;
  align-items: center;
  height: 65px;
  padding: 0 16px 0 18px;
}
.laptop {
  margin-right: 19px;
}
.rate {
  height: 76px;
  padding-left: 15px;
}
.rate .icon-btn {
  margin-left: 14px;
}
.title {
  display: block;
}
.note {
  max-width: 254px;
  font-size: 11px;
  line-height: 15px;
  color: #6b6b6b;
}
.card-head:not(.rate) .note {
  max-width: none;
}
.strong {
  margin-left: 3px;
  font-weight: 600;
}
.card-body {
  padding-left: 56px;
  border-top: 1px solid #e5e5e5;
}
.info {
  padding-top: 6px;
  padding-bottom: 5px;
  line-height: 24px;
}
.info dl {
  display: grid;
  grid-template-columns: 143px 1fr;
  margin: 0;
}
.info dd {
  margin: 0;
  color: #717171;
}
.adapter {
  margin-left: 1px;
}
.dynamic {
  display: flex;
  align-items: center;
  padding-top: 10px;
  padding-right: 42px;
  padding-bottom: 9px;
}
.hint {
  display: flex;
  align-items: center;
  gap: 5px;
  font-size: 11px;
  line-height: 17px;
}
.hint a {
  margin-left: 7px;
}
.off {
  display: flex;
  align-items: center;
  gap: 11px;
  color: #999;
}
.toggle {
  appearance: none;
  width: 38px;
  height: 20px;
  margin: 0;
  border: 1px solid #bdbdbd;
  border-radius: 10px;
  background: radial-gradient(circle at 9px 9px, #9c9c9c 6px, transparent 7px) #fcfcfc;
}
.links {
  display: grid;
  justify-items: start;
  gap: 14px;
  margin-top: 34px;
}
.links a {
  display: flex;
  align-items: center;
  gap: 16px;
}
.links svg {
  width: 16px;
  height: 16px;
}

/* Device Manager */
.devices {
  border-right-color: #c4c4c4;
  font-size: 11px;
  background: #f0f0f0;
}
.devices-bar {
  display: flex;
  align-items: center;
  gap: 5px;
  height: 30px;
  padding: 0 18px 2px 7px;
  background: #f3f3f3;
  color: #8a8a8a;
}
.menu {
  display: flex;
  gap: 15px;
  height: 21px;
  padding: 2px 0 0 10px;
  border-bottom: 1px solid #c9ccd0;
  background: #fff;
}
.menu button {
  padding: 0;
  border: 0;
  background: none;
}
.toolbar {
  display: flex;
  align-items: center;
  gap: 6px;
  height: 22px;
  padding: 2px 0 0 4px;
  background: #fff;
}
.toolbar svg {
  width: 16px;
  height: 16px;
}
.toolbar i {
  width: 1px;
  height: 20px;
  margin: 0 3px 0 -2px;
  background: #cfcfcf;
}
.tree {
  flex: 1;
  display: grid;
  grid-template-rows: repeat(37, 1fr);
  min-height: 0;
  margin: 6px 0 0;
  padding: 0 0 272px 4px;
  border: solid #828282;
  border-width: 2px 0 0 2px;
  background: #fff;
  list-style: none;
}
.tree li {
  display: flex;
  align-items: center;
  min-height: 0;
  padding-left: 19px;
  line-height: 17px;
  white-space: nowrap;
}
.tree .root {
  padding-left: 0;
}
.tree .leaf {
  padding-left: 53px;
}
.tree svg {
  width: 16px;
  height: 16px;
  margin-right: 4px;
}
.tree .arrow {
  width: 10px;
  height: 10px;
  margin-right: 6px;
  color: #8f8f8f;
}
.tree .open .arrow {
  color: #222;
}
.status {
  display: grid;
  grid-template-columns: 1fr 128px 84px;
  height: 24px;
}
.status span + span {
  border-left: 1px solid #dcdcdc;
}

/* Taskbar */
.taskbar {
  display: grid;
  grid-template-columns: 1fr auto 1fr;
  align-items: center;
  background: linear-gradient(to right, #e1edf7 14%, #d3dcf3 32%, #d5dcee 50%, #d3dcf5 70%, #e1ecf7 84%);
  font-size: 11px;
  line-height: 15px;
}
.weather {
  display: flex;
  align-items: center;
  gap: 9px;
  padding: 0 0 2px 20px;
}
.weather span {
  color: #666;
}
.apps {
  display: flex;
  align-items: center;
  gap: 18px;
}
.app {
  position: relative;
  width: 24px;
  height: 24px;
  padding: 0;
  border: 0;
  background: none;
}
.running::after {
  content: '';
  position: absolute;
  left: 9px;
  bottom: -7px;
  width: 6px;
  height: 3px;
  border-radius: 2px;
  background: #80858c;
}
.tooltip {
  position: absolute;
  left: -10px;
  bottom: 47px;
  padding: 6px 9px;
  border: 1px solid #e0e0e0;
  border-radius: 4px;
  background: #fafafa;
  box-shadow: 0 3px 6px rgba(0, 0, 0, 0.2);
  line-height: 17px;
}
.task-search {
  display: flex;
  align-items: center;
  gap: 10px;
  width: 210px;
  height: 29px;
  margin: 0 -6px;
  padding: 0 10px;
  border-radius: 15px;
  background: #f3f7fd;
  box-shadow: 0 1px 1px #b9c2d4;
  font-size: 13px;
}
.tray {
  display: flex;
  align-items: center;
  justify-content: flex-end;
  padding: 0 19px 2px 0;
}
.cloud {
  margin-left: 16px;
}
.status-icons {
  display: flex;
  gap: 7px;
  margin: 0 16px 0 15px;
}
.clock {
  text-align: right;
}
```
